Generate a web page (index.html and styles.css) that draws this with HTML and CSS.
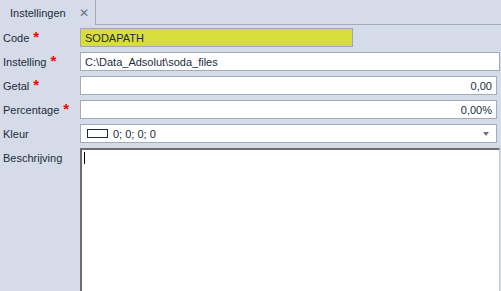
FILE: index.html
```html
<!DOCTYPE html>
<html lang="nl">

<head>
    <meta charset="UTF-8">
    <meta name="viewport" content="width=device-width, initial-scale=1.0">
    <title>Instellingen</title>
    <link rel="stylesheet" href="styles.css">
</head>

<body>
    <div class="tabs">
        <div class="tab">
            <span>Instellingen</span>
            <span class="close">&#x2715;</span>
        </div>
        <div class="tab-rest"></div>
    </div>
    <div class="form">
        <div class="row">
            <div class="label">Code <b>*</b></div>
            <div class="field code">SODAPATH</div>
        </div>
        <div class="row">
            <div class="label">Instelling <b>*</b></div>
            <div class="field wide">C:\Data_Adsolut\soda_files</div>
        </div>
        <div class="row">
            <div class="label">Getal <b>*</b></div>
            <div class="field num">0,00</div>
        </div>
        <div class="row">
            <div class="label">Percentage <b>*</b></div>
            <div class="field num">0,00%</div>
        </div>
        <div class="row">
            <div class="label">Kleur</div>
            <div class="field combo">
                <span class="swatch"></span>
                <span class="combo-text">0; 0; 0; 0</span>
                <span class="arrow"></span>
            </div>
        </div>
        <div class="row memo-row">
            <div class="label">Beschrijving</div>
            <div class="memo"><span class="caret"></span></div>
        </div>
    </div>
</body>

</html>
```

FILE: styles.css
```css
html,
body {
    margin: 0;
    height: 100%;
    background: #d5dbe8;
    font-family: "Liberation Sans", Arial, sans-serif;
    font-size: 11px;
    color: #1e2b3c;
    overflow: hidden;
}

.tabs {
    display: flex;
    height: 25px;
}

.tab {
    width: 96px;
    border-right: 1px solid #a3abbb;
    display: flex;
    align-items: center;
    padding-left: 10px;
    box-sizing: border-box;
    gap: 13px;
}

.tab .close {
    color: #6a7486;
    font-size: 12px;
}

.tab-rest {
    flex: 1;
    border-bottom: 1px solid #a3abbb;
}

.form {
    padding-top: 3px;
    display: flex;
    flex-direction: column;
    gap: 5px;
    height: calc(100% - 28px);
}

.row {
    display: flex;
    height: 19px;
}

.label {
    width: 80px;
    height: 19px;
    padding-left: 3px;
    box-sizing: border-box;
    display: flex;
    align-items: center;
    white-space: nowrap;
}

.label b {
    color: #ff0000;
    font-size: 15px;
    margin-left: 4px;
    position: relative;
    top: -1px;
}

.field {
    height: 19px;
    box-sizing: border-box;
    border: 1px solid #a3abbb;
    background: #fff;
    display: flex;
    align-items: center;
    padding: 0 4px;
    width: 417px;
}

.field.code {
    width: 273px;
    background: #d8dd3d;
    border-color: #a0a8b0;
}

.field.wide {
    width: 420px;
}

.field.num {
    justify-content: flex-end;
}

.combo .swatch {
    width: 21px;
    height: 9px;
    border: 1px solid #1e2b3c;
    box-sizing: border-box;
    margin-left: 2px;
    margin-right: 5px;
}

.combo .combo-text {
    flex: 1;
}

.combo .arrow {
    width: 0;
    height: 0;
    border-left: 3px solid transparent;
    border-right: 3px solid transparent;
    border-top: 4px solid #6a7486;
    margin-right: 3px;
}

.memo-row {
    flex: 1;
    height: auto;
}

.memo-row .label {
    padding-top: 1px;
}

.memo {
    width: 420px;
    box-sizing: border-box;
    background: #fff;
    border-top: 2px solid #6e6e6e;
    border-left: 2px solid #6e6e6e;
    border-right: 1px solid #c3c9d6;
    padding: 2px 0 0 2px;
}

.caret {
    display: block;
    width: 1px;
    height: 12px;
    background: #000;
}
```
